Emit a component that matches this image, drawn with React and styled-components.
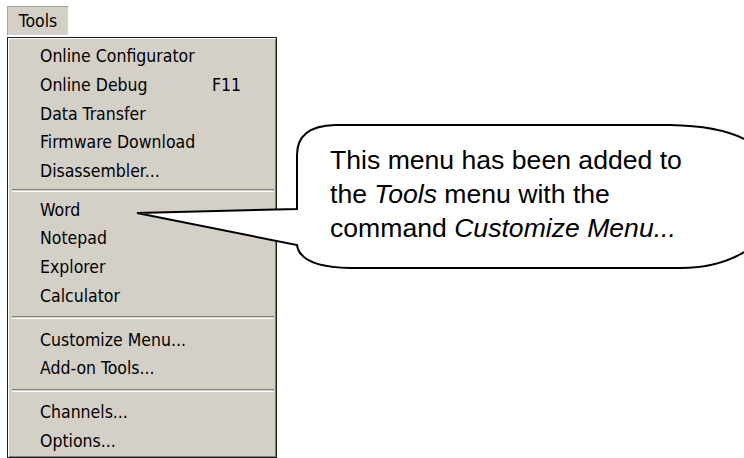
import styled, { createGlobalStyle } from "styled-components";

const GlobalStyle = createGlobalStyle`
  html, body {
    margin: 0;
    padding: 0;
    background: #fff;
    overflow: hidden;
  }
`;

const Page = styled.div`
  position: relative;
  width: 744px;
  height: 458px;
  background: #fff;
  overflow: hidden;
`;

const MenuColumn = styled.div`
  display: flex;
  flex-direction: column;
  align-items: flex-start;
  padding: 6px 0 0 7px;
  font-family: "DejaVu Sans Condensed", "DejaVu Sans", sans-serif;
  font-stretch: semi-condensed;
  font-size: 17.5px;
  color: #000;
`;

const MenuTitle = styled.div`
  box-sizing: border-box;
  width: 62px;
  height: 30px;
  display: flex;
  align-items: center;
  justify-content: center;
  background: #d4d0c8;
  border: 1px solid;
  border-color: #a8a59e #fff #fff #a8a59e;
`;

const MenuPanel = styled.div`
  box-sizing: border-box;
  margin-top: 1px;
  width: 270px;
  height: 421px;
  padding-top: 4px;
  background: #d4d0c8;
  border: 1px solid #1a1a1a;
  box-shadow: inset 1px 1px 0 #fff, inset -1px -1px 0 #808080;
`;

const Item = styled.div`
  display: flex;
  height: 28.7px;
  align-items: center;
  padding-left: 32px;
  white-space: nowrap;
`;

const Label = styled.span`
  width: 172px;
`;

const Separator = styled.div`
  height: ${(p) => (p.$tight ? "10px" : "15px")};
  display: flex;
  align-items: center;
  margin: 0 2px 0 4px;
  &::after {
    content: "";
    flex: 1;
    height: 1px;
    border-top: 1px solid #808080;
    border-bottom: 1px solid #fff;
  }
`;

const Callout = styled.div`
  position: absolute;
  left: 130px;
  top: 118px;
  width: 640px;
  height: 160px;
  pointer-events: none;
`;

const BubbleShape = styled.svg`
  position: absolute;
  inset: 0;
  overflow: visible;
`;

const CalloutText = styled.div`
  position: relative;
  padding: 25px 0 0 200px;
  font-family: "Liberation Sans", Arial, sans-serif;
  font-size: 26.6px;
  line-height: 34px;
  color: #000;
  white-space: nowrap;
`;

const sections = [
  [
    { label: "Online Configurator" },
    { label: "Online Debug", key: "F11" },
    { label: "Data Transfer" },
    { label: "Firmware Download" },
    { label: "Disassembler..." },
  ],
  [{ label: "Word" }, { label: "Notepad" }, { label: "Explorer" }, { label: "Calculator" }],
  [{ label: "Customize Menu..." }, { label: "Add-on Tools..." }],
  [{ label: "Channels..." }, { label: "Options..." }],
];

export default function App() {
  return (
    <Page>
      <GlobalStyle />
      <MenuColumn>
        <MenuTitle>Tools</MenuTitle>
        <MenuPanel>
          {sections.map((items, i) => (
            <div key={i}>
              {i > 0 && <Separator $tight={i === 1} />}
              {items.map((it) => (
                <Item key={it.label}>
                  <Label>{it.label}</Label>
                  {it.key && <span>{it.key}</span>}
                </Item>
              ))}
            </div>
          ))}
        </MenuPanel>
      </MenuColumn>

      <Callout>
        <BubbleShape width="640" height="160" viewBox="0 0 640 160">
          <path
            d="M 7 95 L 167 91 L 167 37 Q 167 8 205 7 L 540 7 Q 605 8 630 32 L 630 122 Q 600 150 550 150 L 220 150 Q 170 149 167 127 Z"
            fill="#fff"
            stroke="#000"
            strokeWidth="2"
          />
        </BubbleShape>
        <CalloutText>
          This menu has been added to
          <br />
          the <em>Tools</em> menu with the
          <br />
          command <em>Customize Menu...</em>
        </CalloutText>
      </Callout>
    </Page>
  );
}
